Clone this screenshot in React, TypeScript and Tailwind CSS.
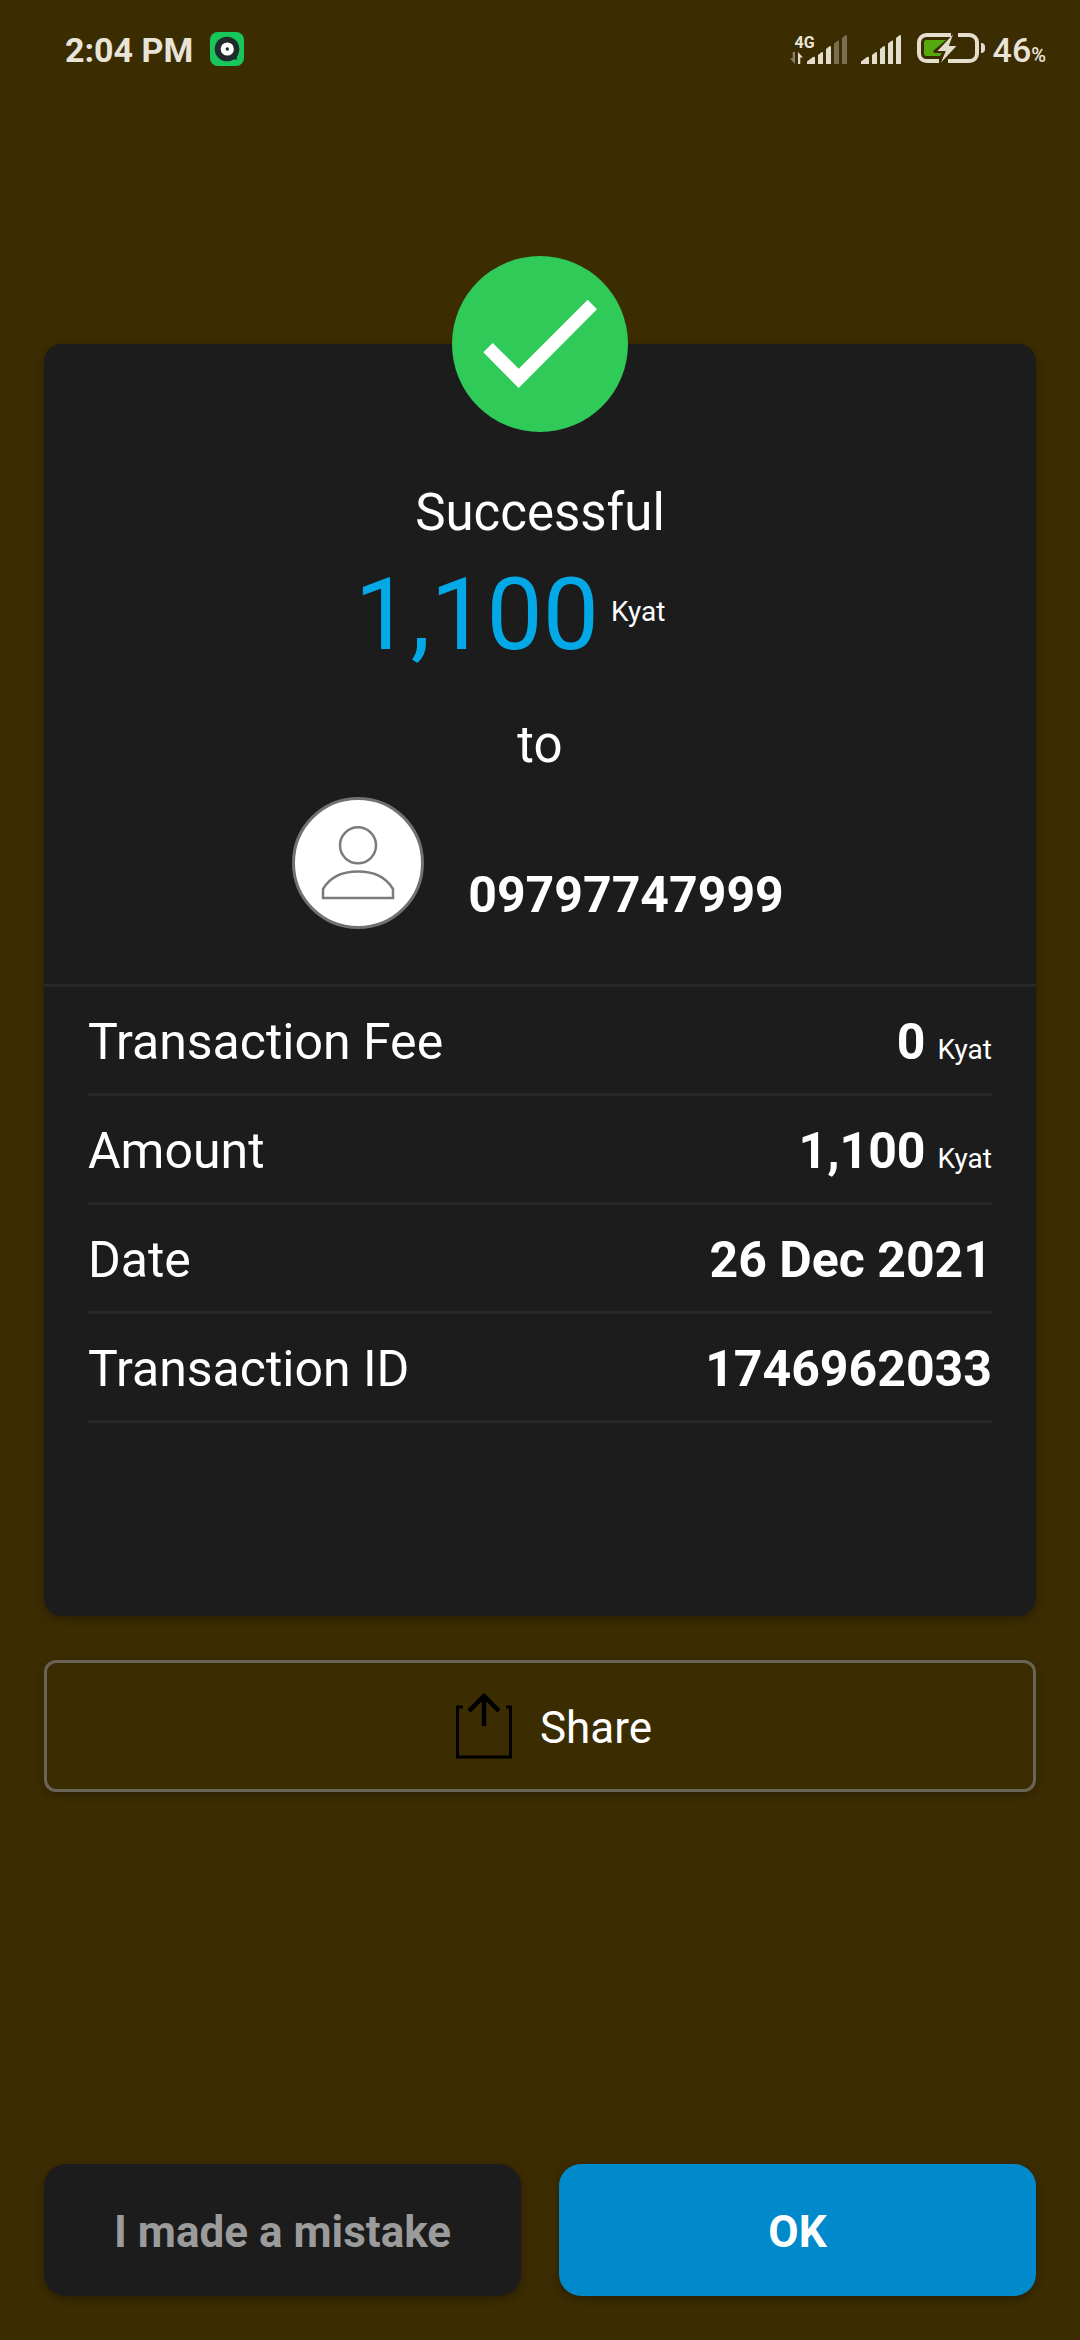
import React from "react";

const details: { label: string; value: string; unit?: string }[] = [
  { label: "Transaction Fee", value: "0", unit: "Kyat" },
  { label: "Amount", value: "1,100", unit: "Kyat" },
  { label: "Date", value: "26 Dec 2021" },
  { label: "Transaction ID", value: "1746962033" },
];

function MusicAppIcon() {
  return (
    <svg width="34" height="34" viewBox="0 0 34 34" aria-hidden="true">
      <rect width="34" height="34" rx="8" fill="#18c75c" />
      <circle cx="17" cy="17" r="12.3" fill="#202a2b" />
      <path d="M23 27.5h4.6c-1-1.200-1-2.300-.2-3.500l1-4z" fill="#202a2b" />
      <circle cx="17.300" cy="17" r="6.600" fill="#fff" />
      <circle cx="17.300" cy="17" r="1.700" fill="#202a2b" />
    </svg>
  );
}

function DataArrows() {
  return (
    <svg width="13" height="12" viewBox="0 0 13 12" aria-hidden="true">
      <path d="M5 0v12L0 6.500h2.700V0z" fill="#8a8169" />
      <path d="M8 12V0l5 5.500h-2.700V12z" fill="#e3ddcc" />
    </svg>
  );
}

function SignalBars({ strength }: { strength: number }) {
  const bars = [
    "M0 29v-2.500l6-4.500q2-1 2 1v6z",
    "M11 29v-9l3.500-2.700q1.500-.8 1.500 1V29z",
    "M19 29V14l3.500-2.700q1.500-.8 1.500 1V29z",
    "M27 29V8.500L30.500 5.800q1.500-.8 1.500 1V29z",
    "M35 29V3L38.500.3q1.500-.8 1.500 1V29z",
  ];
  return (
    <svg width="40" height="29" viewBox="0 0 40 29" aria-hidden="true">
      {bars.map((d, i) => (
        <path key={d} d={d} fill={i < strength ? "#e3ddcc" : "#7a6e50"} />
      ))}
    </svg>
  );
}

function BatteryIcon() {
  return (
    <svg width="68" height="32" viewBox="0 0 68 32" fill="none" aria-hidden="true">
      <path
        d="M34 2H9.500a7.500 7.500 0 0 0-7.500 7.500v11A7.500 7.500 0 0 0 9.500 28H22M41 2h11.500a7.500 7.500 0 0 1 7.500 7.500v11a7.500 7.500 0 0 1-7.500 7.500H31"
        stroke="#e3ddcc"
        strokeWidth="4"
      />
      <path d="M9.500 7H29L16.500 17.500V20h8L23 23H9.500A2.500 2.500 0 0 1 7 20.500v-11A2.500 2.500 0 0 1 9.500 7z" fill="#55a90f" />
      <path d="M36 1.500 20.500 18h8.300L24 29.500 39.500 13h-7.700z" fill="#e3ddcc" />
      <path d="M64 10q4 0 4 4v2q0 4-4 4z" fill="#e3ddcc" />
    </svg>
  );
}

function StatusBar() {
  return (
    <header className="flex h-[98px] items-center justify-between pr-[34px] pl-[65px] text-[#e9e4d8]">
      <div className="flex items-center gap-[17px]">
        <span className="pt-0.5 text-[34px] leading-10 font-bold">2:04 PM</span>
        <MusicAppIcon />
      </div>
      <div className="flex items-center">
        <div className="mr-3.5 flex items-end">
          <div className="-mr-2 flex flex-col">
            <span className="ml-[5px] text-[16px] leading-[18px] font-bold">4G</span>
            <DataArrows />
          </div>
          <SignalBars strength={3} />
        </div>
        <div className="flex items-center">
          <SignalBars strength={5} />
          <div className="ml-4">
            <BatteryIcon />
          </div>
          <div className="ml-2 flex items-baseline pt-0.5 leading-10 font-medium">
            <span className="text-[34px]">46</span>
            <span className="text-[20px] leading-6">%</span>
          </div>
        </div>
      </div>
    </header>
  );
}

function SuccessBadge() {
  return (
    <svg width="176" height="176" viewBox="0 0 176 176" role="img" aria-label="Success">
      <circle cx="88" cy="88" r="88" fill="#30ca59" />
      <path d="M31.300 96.300 40.700 87l26 25.700 69-69 9.300 9.600L66.700 132z" fill="#fff" />
    </svg>
  );
}

function Avatar() {
  return (
    <svg width="132" height="132" viewBox="0 0 132 132" fill="none" aria-hidden="true">
      <circle cx="66" cy="66" r="64.500" fill="#fff" stroke="#717171" strokeWidth="3" />
      <g stroke="#7b7b7b" strokeWidth="2.500">
        <circle cx="66" cy="48.300" r="18" />
        <path d="M31 101V92C38 80 51 74.500 66 74.500S94 80 101 92v9z" />
      </g>
    </svg>
  );
}

function ShareIcon() {
  return (
    <svg width="56" height="66" viewBox="0 0 56 66" fill="none" stroke="#000" aria-hidden="true">
      <path d="M7 14H1.500v50h53V14H50" strokeWidth="3" />
      <path d="M28 33V3M13 18 28 3l15 15" strokeWidth="4.500" />
    </svg>
  );
}

export default function App() {
  return (
    <div className="flex min-h-screen flex-col bg-[#3c2c02] font-['Roboto',sans-serif] text-white">
      <StatusBar />
      <main className="flex flex-1 flex-col px-11 pt-[246px] pb-11">
        <section className="rounded-[18px] bg-[#1c1c1c] pb-[193px] shadow-[0_3px_8px_rgba(0,0,0,0.3)]">
          <div className="-mt-[88px] flex flex-col items-center border-b-3 border-[#282828] pb-[55px]">
            <SuccessBadge />
            <h1 className="mt-[51px] text-[51px] leading-[60px]">Successful</h1>
            <p className="mt-3 flex items-center gap-3 pr-[60px]">
              <span className="text-[100px] leading-[120px] text-[#03a9e6]">1,100</span>
              <span className="pb-1.5 text-[28px] leading-8">Kyat</span>
            </p>
            <p className="mt-10 text-[51px] leading-[60px]">to</p>
            <div className="mt-[22px] flex items-end gap-11 pr-1">
              <Avatar />
              <p className="pb-1 text-[50px] leading-[60px] font-bold">09797747999</p>
            </div>
          </div>
          <dl className="px-11">
            {details.map(({ label, value, unit }) => (
              <div
                key={label}
                className="flex h-[109px] items-center justify-between border-b-3 border-[#282828] pt-1"
              >
                <dt className="text-[50px] leading-[60px]">{label}</dt>
                <dd className="flex items-baseline gap-3">
                  <span className="text-[50px] leading-[60px] font-bold">{value}</span>
                  {unit && <span className="text-[28px] leading-8">{unit}</span>}
                </dd>
              </div>
            ))}
          </dl>
        </section>

        <button
          type="button"
          className="mt-11 flex h-33 items-center justify-center gap-7 rounded-xl border-3 border-[#6a6457] pl-7 text-[44px] shadow-[0_3px_8px_rgba(0,0,0,0.25)]"
        >
          <ShareIcon />
          <span className="pt-1">Share</span>
        </button>

        <div className="mt-auto grid grid-cols-2 gap-[38px] text-[44px] font-bold">
          <button
            type="button"
            className="h-33 rounded-[22px] bg-[#1c1c1c] pt-1 text-[#9b9b9b] shadow-[0_3px_8px_rgba(0,0,0,0.3)]"
          >
            I made a mistake
          </button>
          <button
            type="button"
            className="h-33 rounded-[22px] bg-[#018acb] pt-1 shadow-[0_3px_8px_rgba(0,0,0,0.3)]"
          >
            OK
          </button>
        </div>
      </main>
    </div>
  );
}
